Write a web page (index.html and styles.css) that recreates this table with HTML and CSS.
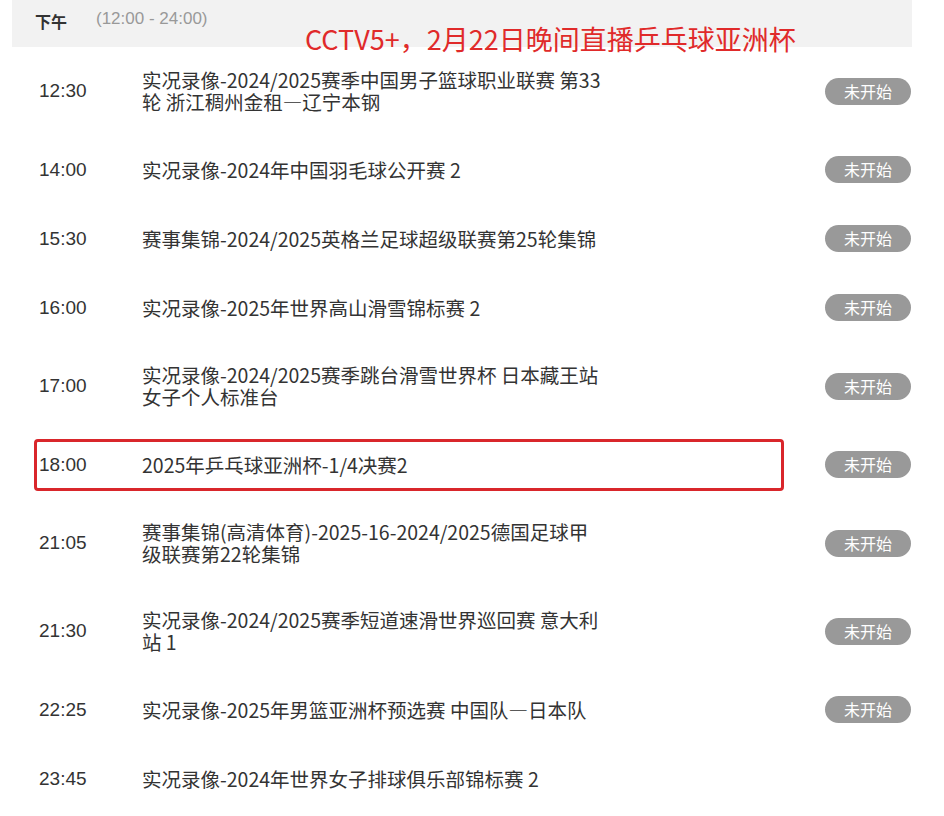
FILE: index.html
```html
<!DOCTYPE html>
<html lang="zh">
<head>
    <meta charset="UTF-8">
    <title>节目单 - 下午</title>
    <link rel="stylesheet" href="styles.css">
</head>
<body>
    <div class="schedule">
        <!-- 时段标题 -->
        <div class="period">
            <span class="period-name">下午</span>
            <span class="period-range">(12:00 - 24:00)</span>
            <span class="note">CCTV5+，2月22日晚间直播乒乓球亚洲杯</span>
        </div>

        <!-- 节目列表 -->
        <div class="row">
            <span class="time">12:30</span>
            <span class="title">实况录像-2024/2025赛季中国男子篮球职业联赛 第33<br>轮 浙江稠州金租—辽宁本钢</span>
            <span class="status">未开始</span>
        </div>
        <div class="row">
            <span class="time">14:00</span>
            <span class="title">实况录像-2024年中国羽毛球公开赛 2</span>
            <span class="status">未开始</span>
        </div>
        <div class="row">
            <span class="time">15:30</span>
            <span class="title">赛事集锦-2024/2025英格兰足球超级联赛第25轮集锦</span>
            <span class="status">未开始</span>
        </div>
        <div class="row">
            <span class="time">16:00</span>
            <span class="title">实况录像-2025年世界高山滑雪锦标赛 2</span>
            <span class="status">未开始</span>
        </div>
        <div class="row">
            <span class="time">17:00</span>
            <span class="title">实况录像-2024/2025赛季跳台滑雪世界杯 日本藏王站<br>女子个人标准台</span>
            <span class="status">未开始</span>
        </div>
        <div class="row marked">
            <span class="time">18:00</span>
            <span class="title">2025年乒乓球亚洲杯-1/4决赛2</span>
            <span class="status">未开始</span>
        </div>
        <div class="row">
            <span class="time">21:05</span>
            <span class="title">赛事集锦(高清体育)-2025-16-2024/2025德国足球甲<br>级联赛第22轮集锦</span>
            <span class="status">未开始</span>
        </div>
        <div class="row">
            <span class="time">21:30</span>
            <span class="title">实况录像-2024/2025赛季短道速滑世界巡回赛 意大利<br>站 1</span>
            <span class="status">未开始</span>
        </div>
        <div class="row">
            <span class="time">22:25</span>
            <span class="title">实况录像-2025年男篮亚洲杯预选赛 中国队—日本队</span>
            <span class="status">未开始</span>
        </div>
        <div class="row">
            <span class="time">23:45</span>
            <span class="title">实况录像-2024年世界女子排球俱乐部锦标赛 2</span>
        </div>
    </div>
</body>
</html>
```

FILE: styles.css
```css
/* 节目单 */
body {
    margin: 0;
    background-color: #fff;
    font-family: "Liberation Sans", "Noto Sans CJK SC", sans-serif;
    color: #333;
    overflow: hidden;
}

.schedule {
    width: 900px;
    margin-left: 12px;
}

.period {
    position: relative;
    height: 47px;
    background-color: #f2f2f2;
    display: flex;
    align-items: flex-start;
    padding-top: 9px;
    box-sizing: border-box;
}

.period-name {
    margin-left: 23px;
    width: 61px;
    font-size: 16px;
    font-weight: bold;
    color: #333;
}

.period-range {
    font-size: 17px;
    color: #999;
}

/* 红色标注文字 */
.note {
    position: absolute;
    left: 293px;
    top: 20px;
    font-family: "Noto Sans CJK SC", sans-serif;
    font-size: 27px;
    line-height: 38px;
    color: #e02a2a;
    white-space: nowrap;
}

.row {
    position: relative;
    display: flex;
    align-items: center;
    min-height: 69px;
    padding: 22px 0 22px 27px;
    box-sizing: border-box;
}

.time {
    width: 103px;
    flex-shrink: 0;
    font-size: 19px;
    line-height: 22px;
}

.title {
    width: 480px;
    white-space: nowrap;
    font-family: "Noto Sans CJK SC", sans-serif;
    font-size: 19.5px;
    line-height: 22px;
}

.status {
    margin: -3px 1px -3px auto;
    width: 86px;
    height: 27px;
    line-height: 27px;
    border-radius: 14px;
    background-color: #999;
    color: #fff;
    text-align: center;
    font-family: "Noto Sans CJK SC", sans-serif;
    font-size: 16px;
}

.row.marked::after {
    content: "";
    position: absolute;
    left: 22px;
    top: 9px;
    width: 750px;
    height: 52px;
    border: 3px solid #d9262b;
    border-radius: 4px;
    box-sizing: border-box;
}
```
